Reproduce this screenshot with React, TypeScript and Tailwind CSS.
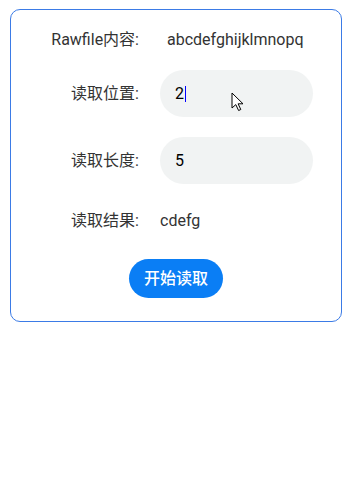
import React from "react";

const font = { fontFamily: 'Roboto, "Noto Sans CJK SC", sans-serif' };

export default function App() {
  return (
    <div className="w-[351px] h-[488px] bg-white pt-[9px] pl-[10px]" style={font}>
      <div className="w-[332px] h-[313px] border border-[#3b7be6] rounded-[10px] flex flex-col">
        <div className="mt-[18px] h-6 flex items-center">
          <div className="w-[128px] text-right text-[16px] text-[#333333]">Rawfile内容:</div>
          <div className="ml-[28px] text-[16px] text-[#333333]">abcdefghijklmnopq</div>
        </div>
        <div className="mt-[18px] h-[47px] flex items-center">
          <div className="w-[128px] text-right text-[16px] text-[#333333]">读取位置:</div>
          <div className="relative ml-[21px] w-[153px] h-[47px] rounded-full bg-[#f1f3f3] flex items-center pl-[15px] text-[16px] text-black">
            <span>2</span>
            <span className="w-[1.5px] h-[16px] bg-[#0000ff] ml-[0.5px]"></span>
            <svg
              className="absolute left-[71px] top-[22px]"
              width="15"
              height="20"
              viewBox="0 0 15 20"
            >
              <path
                d="M1 1 L1 16 L4.8 12.6 L7.6 18.5 L9.8 17.5 L7.1 11.8 L12 11.8 Z"
                fill="white"
                stroke="black"
                strokeWidth="1"
                strokeLinejoin="miter"
              />
            </svg>
          </div>
        </div>
        <div className="mt-[20px] h-[47px] flex items-center">
          <div className="w-[128px] text-right text-[16px] text-[#333333]">读取长度:</div>
          <div className="ml-[21px] w-[153px] h-[47px] rounded-full bg-[#f1f3f3] flex items-center pl-[15px] text-[16px] text-black">
            5
          </div>
        </div>
        <div className="mt-[25px] h-6 flex items-center">
          <div className="w-[128px] text-right text-[16px] text-[#333333]">读取结果:</div>
          <div className="ml-[21px] text-[16px] text-[#333333]">cdefg</div>
        </div>
        <div className="mt-[26px] flex pl-[118px]">
          <button className="w-[94px] h-[39px] rounded-full bg-[#0a7ef5] text-white text-[16px] font-medium">
            开始读取
          </button>
        </div>
      </div>
    </div>
  );
}
